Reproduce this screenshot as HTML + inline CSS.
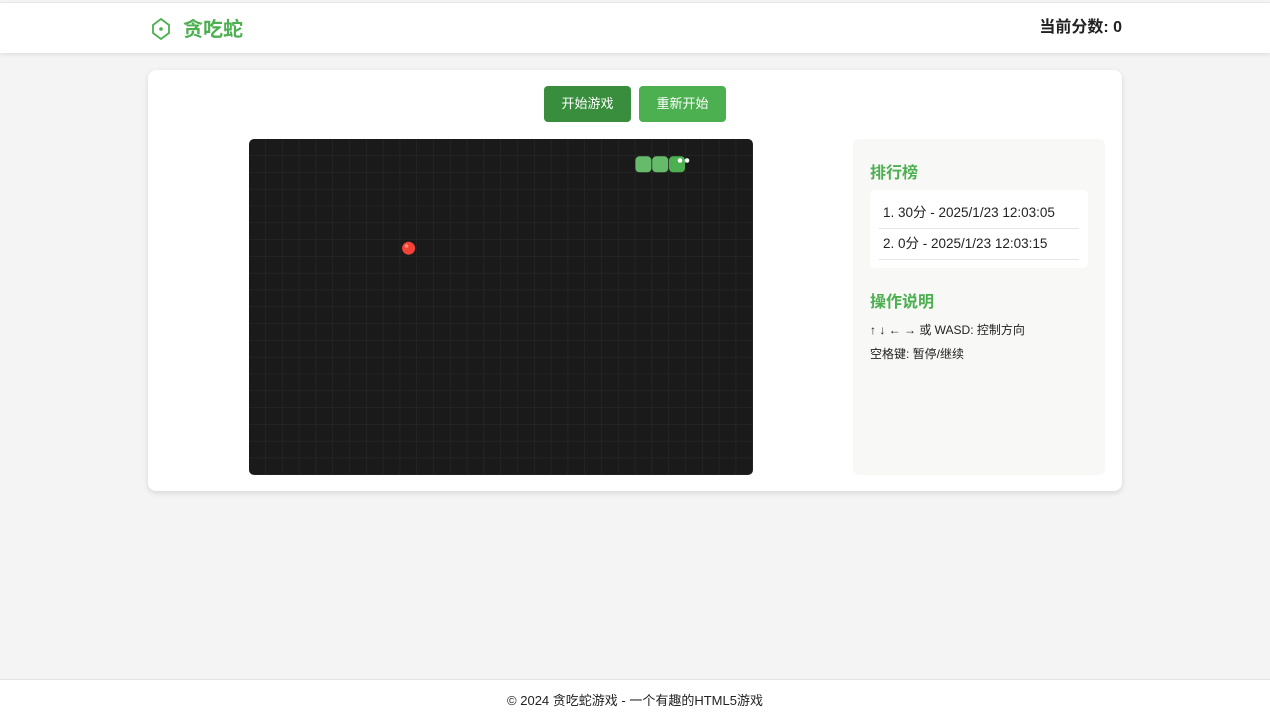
<!DOCTYPE html>
<html><head><meta charset="utf-8"><style>
*{margin:0;padding:0;box-sizing:border-box}
body{width:1270px;height:722px;background:#f4f4f4;font-family:"Liberation Sans","Noto Sans CJK SC",sans-serif;position:relative;overflow:hidden;color:#222}
.hdr{position:absolute;top:2px;left:0;width:1270px;height:51px;background:#fff;border-top:1px solid #e8e8e8;box-shadow:0 2px 4px rgba(0,0,0,.08)}
.logo{position:absolute;left:151px;top:14px;display:flex;align-items:center}
.logo span{font-size:20px;font-weight:bold;color:#4caf50;margin-left:12px;line-height:24px;position:relative;top:1px}
.score{position:absolute;right:148px;top:15px;font-size:16px;font-weight:bold;color:#222;line-height:20px}
.card{position:absolute;left:148px;top:70px;width:974px;height:421px;background:#fff;border-radius:8px;box-shadow:0 2px 6px rgba(0,0,0,.12)}
.btn{position:absolute;top:16px;height:36px;width:87px;border-radius:4px;color:#fff;font-size:13px;text-align:center;line-height:36px}
.side{position:absolute;left:705px;top:69px;width:252px;height:336px;background:#f8f8f6;border-radius:6px}
.side h3{position:absolute;left:17px;font-size:16px;color:#4caf50;font-weight:bold}
.lb{position:absolute;left:17px;top:51px;width:218px;height:78px;background:#fff;border-radius:5px;padding:0 9px}
.lb div{height:31px;border-bottom:1px solid #e6e6e6;font-size:13.5px;line-height:30px;padding-left:4px;margin-top:0}
.lb div:first-child{margin-top:8px}
.ins{position:absolute;left:17px;font-size:12px;color:#222}
.ft{position:absolute;top:679px;left:0;width:1270px;height:43px;background:#fff;border-top:1px solid #e4e4e4;text-align:center;font-size:13px;line-height:42px;color:#222}
</style></head><body>
<div class="hdr">
<div class="logo"><svg width="20" height="24" viewBox="0 0 20 24"><path d="M10 2 L18 8 L18 16 L10 22 L2 16 L2 8 Z" fill="none" stroke="#4caf50" stroke-width="1.8"/><circle cx="10" cy="12" r="1.8" fill="#4caf50"/></svg><span>贪吃蛇</span></div>
<div class="score">当前分数: 0</div>
</div>
<div class="card">
<div class="btn" style="left:396px;background:#388e3c">开始游戏</div>
<div class="btn" style="left:491px;background:#4caf50">重新开始</div>
<svg style="position:absolute;left:101px;top:69px;border-radius:5px" width="504" height="336" viewBox="0 0 504 336">
<defs><pattern id="g" width="16.8" height="16.8" patternUnits="userSpaceOnUse"><rect width="16.8" height="16.8" fill="#1a1a1a"/><path d="M16.8 0V16.8M0 16.8H16.8" stroke="#2b2b2b" stroke-width="1"/></pattern></defs>
<rect width="504" height="336" fill="url(#g)"/>
<rect x="386.4" y="17.3" width="16" height="16" rx="4" fill="#66bb6a"/>
<rect x="403.2" y="17.3" width="16" height="16" rx="4" fill="#66bb6a"/>
<rect x="420" y="17.3" width="16" height="16" rx="4" fill="#4caf50"/>
<circle cx="431" cy="21.5" r="2.3" fill="#fff"/><circle cx="438" cy="21.5" r="2.3" fill="#fff"/>
<circle cx="159.6" cy="109.2" r="6.5" fill="#f44336"/><circle cx="157.5" cy="107" r="1.8" fill="#ff8a80"/>
</svg>
<div class="side">
<h3 style="top:20px">排行榜</h3>
<div class="lb"><div>1. 30分 - 2025/1/23 12:03:05</div><div>2. 0分 - 2025/1/23 12:03:15</div></div>
<h3 style="top:149px">操作说明</h3>
<div class="ins" style="top:182px">↑ ↓ ← → 或 WASD: 控制方向</div>
<div class="ins" style="top:206px">空格键: 暂停/继续</div>
</div>
</div>
<div class="ft">© 2024 贪吃蛇游戏 - 一个有趣的HTML5游戏</div>
</body></html>
